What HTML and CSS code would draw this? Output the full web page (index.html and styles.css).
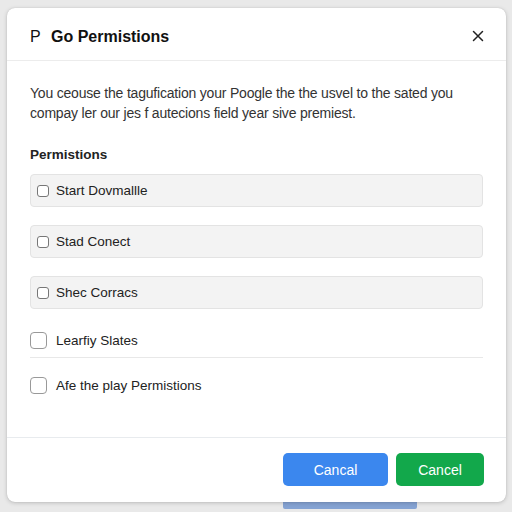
FILE: index.html
```html
<!DOCTYPE html>
<html>
<head>
<meta charset="utf-8">
<link rel="stylesheet" href="styles.css">
</head>
<body>
<div class="backdrop-strip"></div>
<div class="dialog">
  <div class="header">
    <span class="logo">P</span>
    <span class="title">Go Permistions</span>
    <svg class="close" width="12" height="12" viewBox="0 0 12 12"><path d="M1.5 1.5 L10.5 10.5 M10.5 1.5 L1.5 10.5" stroke="#222" stroke-width="1.5" stroke-linecap="round"/></svg>
  </div>
  <div class="body">
    <p class="desc">You ceouse the tagufication your Poogle the the usvel to the sated you<br>compay ler our jes f autecions field year sive premiest.</p>
    <div class="section-title">Permistions</div>
    <div class="list">
      <div class="row boxed"><span class="cb small"></span><span>Start Dovmallle</span></div>
      <div class="row boxed"><span class="cb small"></span><span>Stad Conect</span></div>
      <div class="row boxed"><span class="cb small"></span><span>Shec Corracs</span></div>
      <div class="row plain divided"><span class="cb large"></span><span>Learfiy Slates</span></div>
      <div class="row plain last"><span class="cb large"></span><span>Afe the play Permistions</span></div>
    </div>
  </div>
  <div class="footer">
    <button class="btn blue">Cancal</button>
    <button class="btn green">Cancel</button>
  </div>
</div>
</body>
</html>
```
FILE: styles.css
```css
html, body {
  margin: 0;
  padding: 0;
}
body {
  width: 512px;
  height: 512px;
  background: #e9e9e9;
  font-family: "Liberation Sans", Arial, sans-serif;
  color: #222;
  position: relative;
  overflow: hidden;
}
.backdrop-strip {
  position: absolute;
  left: 283px;
  top: 496px;
  width: 134px;
  height: 13px;
  background: #85a3d3;
  border-radius: 2px;
}
.dialog {
  position: relative;
  margin: 8px 0 0 7px;
  width: 499px;
  height: 494px;
  background: #fff;
  border-radius: 8px;
  box-shadow: 0 1px 4px rgba(0,0,0,0.18), 0 0 1px rgba(0,0,0,0.2);
  display: flex;
  flex-direction: column;
}
.header {
  height: 53px;
  box-sizing: border-box;
  border-bottom: 1px solid #ececec;
  display: flex;
  align-items: center;
  padding: 6px 23px 0 23px;
}
.logo {
  font-size: 16px;
  color: #111;
  width: 21px;
}
.title {
  font-size: 16px;
  font-weight: bold;
  color: #111;
  flex: 1;
}
.close {
  margin-right: -1px;
  margin-top: -2px;
}
.body {
  flex: 1;
  padding: 22px 23px 0 23px;
}
.desc {
  margin: 0;
  font-size: 14px;
  line-height: 20px;
  color: #333;
  letter-spacing: -0.2px;
}
.section-title {
  margin-top: 22px;
  font-size: 13.5px;
  line-height: 20px;
  font-weight: bold;
  color: #222;
}
.list {
  margin-top: 9px;
  width: 453px;
  display: flex;
  flex-direction: column;
}
.row {
  display: flex;
  align-items: center;
  font-size: 13.5px;
  color: #222;
}
.boxed {
  height: 33px;
  box-sizing: border-box;
  background: #f3f3f3;
  border: 1px solid #e3e3e3;
  border-radius: 4px;
  padding-left: 6px;
  margin-bottom: 18px;
}
.list .boxed + .plain {
  margin-top: -4px;
}
.divided {
  border-bottom: 1px solid #e8e8e8;
  height: 34px;
}
.last {
  height: 54px;
}
.cb {
  display: inline-block;
  box-sizing: border-box;
  background: #fff;
}
.cb.small {
  width: 12px;
  height: 12px;
  border: 1px solid #777;
  border-radius: 3px;
  margin-right: 7px;
}
.cb.large {
  width: 17px;
  height: 17px;
  border: 1px solid #999;
  border-radius: 4px;
  margin-right: 9px;
}
.footer {
  height: 65px;
  box-sizing: border-box;
  border-top: 1px solid #e8ebee;
  display: flex;
  justify-content: flex-end;
  align-items: flex-start;
  gap: 8px;
  padding: 15px 22px 0 0;
}
.btn {
  height: 33px;
  border: none;
  border-radius: 5px;
  color: #fff;
  font-family: "Liberation Sans", Arial, sans-serif;
  font-size: 14px;
}
.blue {
  width: 105px;
  background: #3b87ee;
}
.green {
  width: 88px;
  background: #12a84b;
}
```
